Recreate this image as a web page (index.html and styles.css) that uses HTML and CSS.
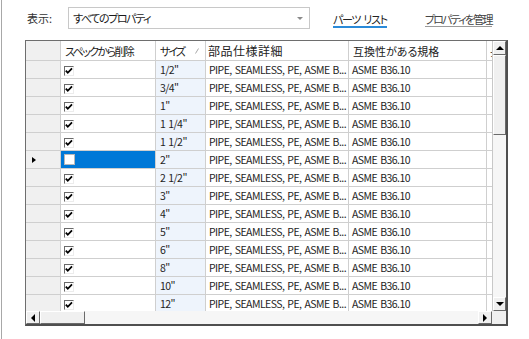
FILE: index.html
```html
<!DOCTYPE html>
<html lang="ja">
<head>
<meta charset="utf-8">
<link rel="stylesheet" href="styles.css">
</head>
<body>
<div class="page">
  <div class="toolbar">
    <span class="label">表示:</span>
    <div class="select"><span class="select-text">すべてのプロパティ</span><span class="caret"></span></div>
    <a class="tab tab-active">パーツ リスト</a>
    <a class="tab tab-plain">プロパティを管理</a>
  </div>
  <div class="grid">
    <div class="grid-top">
      <div class="cells">
        <div class="row head">
          <div class="c rh"></div>
          <div class="c c1"><span class="h-del">スペックから削除</span></div>
          <div class="c c2"><span class="h-size">サイズ</span><svg class="sort" width="4" height="6" viewBox="0 0 4 6"><line x1="0.5" y1="5.5" x2="3.5" y2="0.5" stroke="#a8a8a8" stroke-width="1"/></svg></div>
          <div class="c c3"><span class="h-spec">部品仕様詳細</span></div>
          <div class="c c4">互換性がある規格</div>
          <div class="c c5">長さ</div>
        </div>
        <div class="row"><div class="c rh"></div><div class="c c1"><span class="chk"><svg width="8" height="8" viewBox="0 0 8 8"><polyline points="0.8,3.6 2.8,5.8 7,1.4" fill="none" stroke="#000" stroke-width="1.8"/></svg></span></div><div class="c c2 sz">1/2"</div><div class="c c3">PIPE, SEAMLESS, PE, ASME B...</div><div class="c c4">ASME B36.10</div><div class="c c5"></div></div>
        <div class="row"><div class="c rh"></div><div class="c c1"><span class="chk"><svg width="8" height="8" viewBox="0 0 8 8"><polyline points="0.8,3.6 2.8,5.8 7,1.4" fill="none" stroke="#000" stroke-width="1.8"/></svg></span></div><div class="c c2 sz">3/4"</div><div class="c c3">PIPE, SEAMLESS, PE, ASME B...</div><div class="c c4">ASME B36.10</div><div class="c c5"></div></div>
        <div class="row"><div class="c rh"></div><div class="c c1"><span class="chk"><svg width="8" height="8" viewBox="0 0 8 8"><polyline points="0.8,3.6 2.8,5.8 7,1.4" fill="none" stroke="#000" stroke-width="1.8"/></svg></span></div><div class="c c2 sz">1"</div><div class="c c3">PIPE, SEAMLESS, PE, ASME B...</div><div class="c c4">ASME B36.10</div><div class="c c5"></div></div>
        <div class="row"><div class="c rh"></div><div class="c c1"><span class="chk"><svg width="8" height="8" viewBox="0 0 8 8"><polyline points="0.8,3.6 2.8,5.8 7,1.4" fill="none" stroke="#000" stroke-width="1.8"/></svg></span></div><div class="c c2 sz">1 1/4"</div><div class="c c3">PIPE, SEAMLESS, PE, ASME B...</div><div class="c c4">ASME B36.10</div><div class="c c5"></div></div>
        <div class="row"><div class="c rh"></div><div class="c c1"><span class="chk"><svg width="8" height="8" viewBox="0 0 8 8"><polyline points="0.8,3.6 2.8,5.8 7,1.4" fill="none" stroke="#000" stroke-width="1.8"/></svg></span></div><div class="c c2 sz">1 1/2"</div><div class="c c3">PIPE, SEAMLESS, PE, ASME B...</div><div class="c c4">ASME B36.10</div><div class="c c5"></div></div>
        <div class="row"><div class="c rh"><span class="cur"></span></div><div class="c c1 sel"><span class="chk chk-off"></span></div><div class="c c2 sz">2"</div><div class="c c3">PIPE, SEAMLESS, PE, ASME B...</div><div class="c c4">ASME B36.10</div><div class="c c5"></div></div>
        <div class="row"><div class="c rh"></div><div class="c c1"><span class="chk"><svg width="8" height="8" viewBox="0 0 8 8"><polyline points="0.8,3.6 2.8,5.8 7,1.4" fill="none" stroke="#000" stroke-width="1.8"/></svg></span></div><div class="c c2 sz">2 1/2"</div><div class="c c3">PIPE, SEAMLESS, PE, ASME B...</div><div class="c c4">ASME B36.10</div><div class="c c5"></div></div>
        <div class="row"><div class="c rh"></div><div class="c c1"><span class="chk"><svg width="8" height="8" viewBox="0 0 8 8"><polyline points="0.8,3.6 2.8,5.8 7,1.4" fill="none" stroke="#000" stroke-width="1.8"/></svg></span></div><div class="c c2 sz">3"</div><div class="c c3">PIPE, SEAMLESS, PE, ASME B...</div><div class="c c4">ASME B36.10</div><div class="c c5"></div></div>
        <div class="row"><div class="c rh"></div><div class="c c1"><span class="chk"><svg width="8" height="8" viewBox="0 0 8 8"><polyline points="0.8,3.6 2.8,5.8 7,1.4" fill="none" stroke="#000" stroke-width="1.8"/></svg></span></div><div class="c c2 sz">4"</div><div class="c c3">PIPE, SEAMLESS, PE, ASME B...</div><div class="c c4">ASME B36.10</div><div class="c c5"></div></div>
        <div class="row"><div class="c rh"></div><div class="c c1"><span class="chk"><svg width="8" height="8" viewBox="0 0 8 8"><polyline points="0.8,3.6 2.8,5.8 7,1.4" fill="none" stroke="#000" stroke-width="1.8"/></svg></span></div><div class="c c2 sz">5"</div><div class="c c3">PIPE, SEAMLESS, PE, ASME B...</div><div class="c c4">ASME B36.10</div><div class="c c5"></div></div>
        <div class="row"><div class="c rh"></div><div class="c c1"><span class="chk"><svg width="8" height="8" viewBox="0 0 8 8"><polyline points="0.8,3.6 2.8,5.8 7,1.4" fill="none" stroke="#000" stroke-width="1.8"/></svg></span></div><div class="c c2 sz">6"</div><div class="c c3">PIPE, SEAMLESS, PE, ASME B...</div><div class="c c4">ASME B36.10</div><div class="c c5"></div></div>
        <div class="row"><div class="c rh"></div><div class="c c1"><span class="chk"><svg width="8" height="8" viewBox="0 0 8 8"><polyline points="0.8,3.6 2.8,5.8 7,1.4" fill="none" stroke="#000" stroke-width="1.8"/></svg></span></div><div class="c c2 sz">8"</div><div class="c c3">PIPE, SEAMLESS, PE, ASME B...</div><div class="c c4">ASME B36.10</div><div class="c c5"></div></div>
        <div class="row"><div class="c rh"></div><div class="c c1"><span class="chk"><svg width="8" height="8" viewBox="0 0 8 8"><polyline points="0.8,3.6 2.8,5.8 7,1.4" fill="none" stroke="#000" stroke-width="1.8"/></svg></span></div><div class="c c2 sz">10"</div><div class="c c3">PIPE, SEAMLESS, PE, ASME B...</div><div class="c c4">ASME B36.10</div><div class="c c5"></div></div>
        <div class="row"><div class="c rh"></div><div class="c c1"><span class="chk"><svg width="8" height="8" viewBox="0 0 8 8"><polyline points="0.8,3.6 2.8,5.8 7,1.4" fill="none" stroke="#000" stroke-width="1.8"/></svg></span></div><div class="c c2 sz">12"</div><div class="c c3">PIPE, SEAMLESS, PE, ASME B...</div><div class="c c4">ASME B36.10</div><div class="c c5"></div></div>
      </div>
      <div class="vscroll">
        <div class="sbtn"><span class="arr arr-up"></span></div>
        <div class="thumb thumb-v"></div>
        <div class="track"></div>
        <div class="sbtn"><span class="arr arr-down"></span></div>
      </div>
    </div>
    <div class="hscroll">
      <div class="sbtn sbtn-h"><span class="arr arr-left"></span></div>
      <div class="thumb thumb-h"></div>
      <div class="track"></div>
      <div class="sbtn sbtn-h"><span class="arr arr-right"></span></div>
      <div class="corner"></div>
    </div>
  </div>
</div>
</body>
</html>
```
FILE: styles.css
```css
html, body {
  margin: 0;
  padding: 0;
  background: #ffffff;
}
body {
  font-family: "Noto Sans CJK JP", "Noto Sans", sans-serif;
  font-feature-settings: "palt";
  font-size: 12px;
  color: #1a1a1a;
}
.page {
  box-sizing: border-box;
  height: 339px;
  margin-left: 1px;
  border-left: 1px solid #a8a8a8;
  padding: 7px 0 0 23px;
}
.toolbar {
  display: flex;
  align-items: center;
  height: 22px;
}
.label {
  margin-left: 2px;
  width: 41px;
  font-size: 11px;
  color: #333;
}
.select {
  box-sizing: border-box;
  width: 242px;
  height: 22px;
  border: 1px solid #c8c8c8;
  display: flex;
  align-items: center;
  padding-left: 4px;
}
.select-text {
  font-size: 11px;
  letter-spacing: -1.4px;
  flex: 1;
}
.caret {
  width: 0;
  height: 0;
  border-left: 3px solid transparent;
  border-right: 3px solid transparent;
  border-top: 3px solid #8a8a8a;
  margin-right: 6px;
}
.tab {
  font-size: 11px;
  line-height: 14px;
  padding-top: 3px;
  color: #222;
}
.tab-active {
  margin-left: 23px;
  letter-spacing: -1.3px;
  word-spacing: 2px;
  border-bottom: 2px solid #2a8ad8;
}
.tab-plain {
  margin-left: 38px;
  letter-spacing: -1.8px;
  color: #444;
  border-bottom: 1px solid #9a9a9a;
}
.grid {
  box-sizing: border-box;
  margin-top: 11px;
  width: 483px;
  height: 286px;
  border-top: 1px solid #6e6e6e;
  border-left: 1px solid #6e6e6e;
  border-right: 2px solid #4f4f4f;
  border-bottom: 2px solid #4f4f4f;
  display: flex;
  flex-direction: column;
}
.grid-top {
  display: flex;
  height: 270px;
}
.cells {
  width: 466px;
  overflow: hidden;
}
.row {
  display: flex;
  height: 18px;
}
.row.head {
  height: 20px;
}
.c {
  box-sizing: border-box;
  flex: none;
  border-right: 1px solid #cfcfcf;
  border-bottom: 1px solid #cfcfcf;
  padding-left: 4px;
  white-space: nowrap;
  overflow: hidden;
  display: flex;
  align-items: center;
  font-size: 10.5px;
  letter-spacing: -0.55px;
  word-spacing: 1.2px;
  color: #1e1e1e;
}
.head .c {
  font-size: 11px;
  letter-spacing: 0;
  word-spacing: 0;
  color: #222;
}
.h-del { letter-spacing: -1.6px; }
.h-size { letter-spacing: -2px; }
.h-spec { font-size: 12px; letter-spacing: 0.5px; }
.rh {
  width: 35px;
  background: #f0f0f0;
  padding-left: 6px;
}
.c1 { width: 95px; align-items: flex-start; padding-left: 3px; }
.head .c1 { align-items: center; padding-left: 4px; }
.c2 { width: 50px; }
.c3 { width: 143px; padding-left: 3px; }
.head .c3 { padding-left: 2px; }
.c4 { width: 138px; padding-left: 3px; }
.head .c4 { padding-left: 4px; }
.c5 { width: 20px; border-right: none; padding-left: 3px; }
.sz { background: #eef4fc; }
.sort { margin-left: 11px; }
.sel { background: #0078d7; }
.chk {
  box-sizing: border-box;
  width: 10px;
  height: 10px;
  margin-top: 5px;
  border-top: 1px solid #6a6a6a;
  border-left: 1px solid #6a6a6a;
  border-right: 1px solid #ececec;
  border-bottom: 1px solid #ececec;
  background: #fff;
  display: flex;
  align-items: center;
  justify-content: center;
}
.chk-off {
  width: 11px;
  height: 11px;
  margin-top: 3px;
  border: 1px solid #b8b8b8;
}
.cur {
  width: 0;
  height: 0;
  border-left: 4px solid #000;
  border-top: 3px solid transparent;
  border-bottom: 3px solid transparent;
}
.vscroll {
  box-sizing: border-box;
  width: 14px;
  border-left: 1px solid #c8c8c8;
  display: flex;
  flex-direction: column;
  background: #f4f4f4;
}
.sbtn {
  box-sizing: border-box;
  flex: none;
  height: 14px;
  background: #f0f0f0;
  border-top: 1px solid #ffffff;
  border-left: 1px solid #ffffff;
  border-right: 1px solid #6a6a6a;
  border-bottom: 1px solid #6a6a6a;
  display: flex;
  align-items: center;
  justify-content: center;
}
.sbtn-h {
  width: 14px;
  height: 13px;
}
.thumb {
  box-sizing: border-box;
  flex: none;
  background: #f0f0f0;
  border-top: 1px solid #ffffff;
  border-left: 1px solid #ffffff;
  border-right: 1px solid #6a6a6a;
  border-bottom: 1px solid #6a6a6a;
}
.thumb-v { height: 80px; }
.thumb-h { width: 45px; height: 13px; }
.track {
  flex: 1;
  background: #f6f6f6;
}
.arr {
  width: 0;
  height: 0;
}
.arr-up {
  border-left: 4px solid transparent;
  border-right: 4px solid transparent;
  border-bottom: 4px solid #000;
}
.arr-down {
  border-left: 4px solid transparent;
  border-right: 4px solid transparent;
  border-top: 4px solid #000;
}
.arr-left {
  border-top: 4px solid transparent;
  border-bottom: 4px solid transparent;
  border-right: 4px solid #000;
}
.arr-right {
  border-top: 4px solid transparent;
  border-bottom: 4px solid transparent;
  border-left: 4px solid #000;
}
.hscroll {
  display: flex;
  height: 13px;
  background: #f6f6f6;
}
.corner {
  width: 14px;
  background: #f0f0f0;
}
```
